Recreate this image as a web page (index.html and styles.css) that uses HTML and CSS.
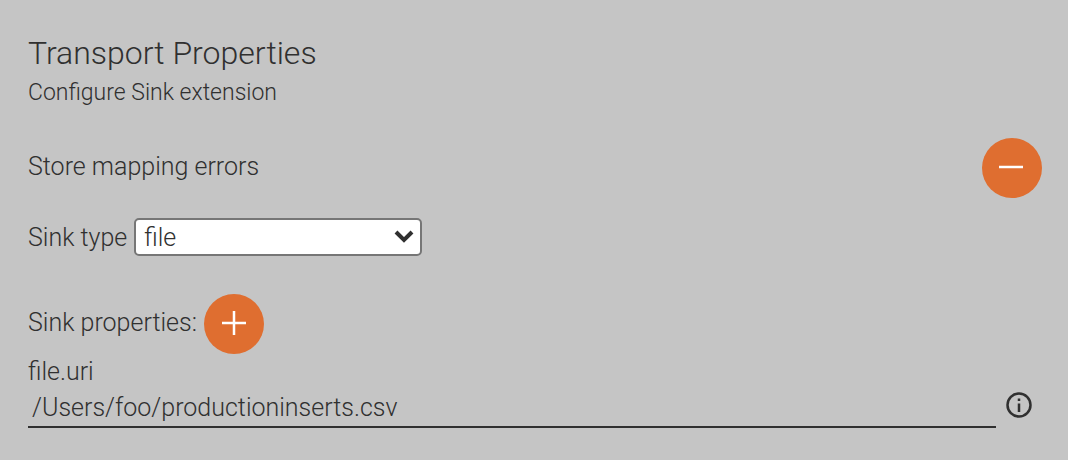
FILE: index.html
```html
<!DOCTYPE html>
<html lang="en">
<head>
<meta charset="utf-8">
<title>Transport Properties</title>
<link rel="stylesheet" href="styles.css">
</head>
<body>
<main class="panel">
  <h1 class="title">Transport Properties</h1>
  <p class="subtitle">Configure Sink extension</p>
  <section class="row row-errors">
    <span class="row-text">Store mapping errors</span>
    <button class="round" type="button" aria-label="Remove">
      <svg width="60" height="60" viewBox="0 0 60 60"><path d="M17 29H41"/></svg>
    </button>
  </section>
  <div class="row row-type">
    <label for="sink-type">Sink type</label>
    <div class="select-wrap">
      <select id="sink-type" class="select"><option>file</option></select>
      <svg class="chevron" width="20" height="14" viewBox="0 0 20 14"><path d="M2 2L10 10L18 2"/></svg>
    </div>
  </div>
  <div class="row row-props">
    <span class="row-text">Sink properties:</span>
    <button class="round" type="button" aria-label="Add">
      <svg width="60" height="60" viewBox="0 0 60 60"><path d="M18 29H42M30 17V41"/></svg>
    </button>
  </div>
  <label class="field-label" for="file-uri">file.uri</label>
  <div class="field">
    <input id="file-uri" class="input" type="text" value="/Users/foo/productioninserts.csv">
    <button class="info" type="button" aria-label="Information">
      <svg width="28" height="28" viewBox="0 0 28 28"><circle cx="14" cy="14" r="11.5"/><path d="M14 7.5V10M14 12.5V21"/></svg>
    </button>
  </div>
</main>
</body>
</html>
```
FILE: styles.css
```css
* { box-sizing: border-box; }
body {
  margin: 0;
  background: #c5c5c5;
  color: #303030;
  font: 300 25px/32px Roboto, sans-serif;
}
.panel { padding: 32px 26px 0 28px; }
.title { margin: 0; font-size: 32px; font-weight: 300; line-height: 42px; }
.subtitle { margin: 3px 0 0; font-size: 23px; }
.row { display: flex; align-items: center; gap: 7px; }
.row-text { padding-bottom: 3px; }
.row-errors { justify-content: space-between; margin-top: 29px; }
.row-type { margin-top: 20px; }
.row-type label { padding-top: 1px; }
.row-props { margin-top: 38px; }
.round {
  width: 60px;
  height: 60px;
  padding: 0;
  border: 0;
  border-radius: 50%;
  background: #df6e30;
}
.round svg { display: block; fill: none; stroke: #fff; stroke-width: 2.5; }
.select-wrap { position: relative; width: 288px; }
.select {
  display: block;
  width: 100%;
  height: 38px;
  padding: 1px 8px 0;
  border: 2px solid #767676;
  border-radius: 5px;
  appearance: none;
  background: #fff;
  color: inherit;
  font: inherit;
}
.chevron {
  position: absolute;
  top: 12px;
  right: 8px;
  fill: none;
  stroke: #303030;
  stroke-width: 4;
  pointer-events: none;
}
.field-label { display: block; margin-top: 2px; }
.field { display: flex; align-items: center; }
.input {
  flex: 1;
  min-width: 0;
  height: 40px;
  padding: 0 4px;
  border: 0;
  border-bottom: 2px solid #303030;
  background: transparent;
  color: inherit;
  font: inherit;
}
.info { margin: 0 9px 6px; padding: 0; border: 0; background: none; }
.info svg { display: block; fill: none; stroke: #303030; stroke-width: 2.5; }
```
